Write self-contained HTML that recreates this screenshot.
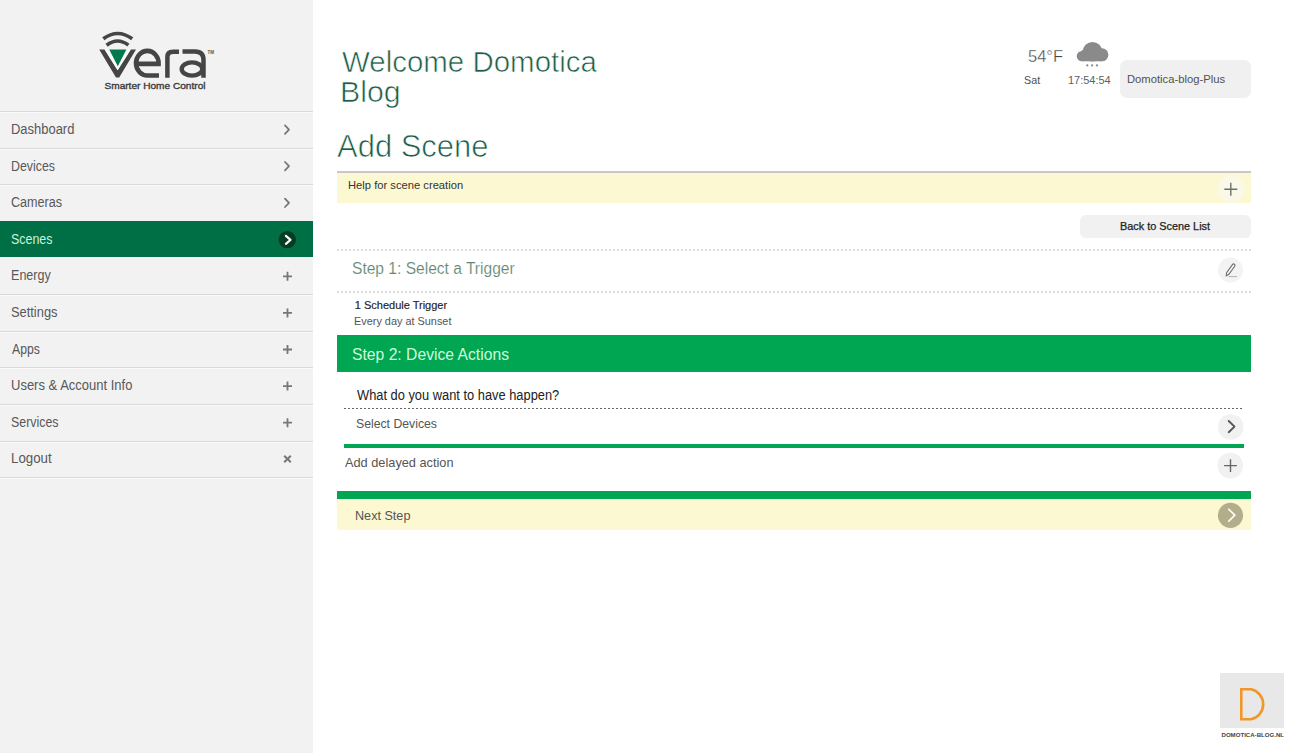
<!DOCTYPE html>
<html><head><meta charset="utf-8"><style>
html,body{margin:0;padding:0;width:1300px;height:753px;overflow:hidden;background:#fff;position:relative}
body{font-family:"Liberation Sans", sans-serif}
.t{position:absolute;white-space:nowrap;line-height:1;transform-origin:0 0}
.sb{position:absolute;left:0;top:0;width:313px;height:753px;background:#f2f2f2}
.sep{position:absolute;left:0;width:313px;height:1px;background:#d9d9d9;box-shadow:0 1px 0 #fafafa}
.abs{position:absolute}
.dots{position:absolute;height:2px;background:repeating-linear-gradient(90deg,#dcdcdc 0 2px,transparent 2px 4px)}
</style></head><body>
<div class="sb"></div>
<div class="sep" style="top:111px"></div>
<div class="sep" style="top:148px"></div>
<div class="sep" style="top:184px"></div>
<div class="sep" style="top:294px"></div>
<div class="sep" style="top:331px"></div>
<div class="sep" style="top:367px"></div>
<div class="sep" style="top:404px"></div>
<div class="sep" style="top:441px"></div>
<div class="sep" style="top:477px"></div>
<div class="abs" style="left:0;top:221px;width:313px;height:36px;background:#006f45"></div>
<svg class="abs" style="left:0;top:0" width="313" height="753" viewBox="0 0 313 753">
<path d="M285.0 125.4 L289.0 129.6 L285.0 133.8" fill="none" stroke="#777" stroke-width="1.8" stroke-linecap="round" stroke-linejoin="round"/><path d="M285.0 162.0 L289.0 166.2 L285.0 170.4" fill="none" stroke="#777" stroke-width="1.8" stroke-linecap="round" stroke-linejoin="round"/><path d="M285.0 198.6 L289.0 202.8 L285.0 207.0" fill="none" stroke="#777" stroke-width="1.8" stroke-linecap="round" stroke-linejoin="round"/><circle cx="287.3" cy="239.6" r="8.7" fill="#083b24"/><path d="M285.9 235.8 L290.5 239.8 L285.9 243.8" fill="none" stroke="#f2fff6" stroke-width="2.2" stroke-linecap="round" stroke-linejoin="round"/><path d="M283.0 276.3 H292.0 M287.5 271.8 V280.8" stroke="#777" stroke-width="1.8" fill="none"/><path d="M283.0 312.9 H292.0 M287.5 308.4 V317.4" stroke="#777" stroke-width="1.8" fill="none"/><path d="M283.0 349.5 H292.0 M287.5 345.0 V354.0" stroke="#777" stroke-width="1.8" fill="none"/><path d="M283.0 386.1 H292.0 M287.5 381.6 V390.6" stroke="#777" stroke-width="1.8" fill="none"/><path d="M283.0 422.7 H292.0 M287.5 418.2 V427.2" stroke="#777" stroke-width="1.8" fill="none"/><path d="M284.2 455.7 L290.8 462.3 M290.8 455.7 L284.2 462.3" stroke="#777" stroke-width="2" fill="none"/>
<!-- logo -->
<path d="M103.3 38.8 Q117.6 28.2 132.2 38.8" stroke="#454545" stroke-width="3.6" fill="none"/>
<path d="M106.6 45.2 Q117.6 36.8 128.4 45.2" stroke="#454545" stroke-width="3.6" fill="none"/>
<path d="M99.2 49.4 L104.6 49.4 L117.6 70.2 L130.8 49.4 L136 49.4 L119.2 77.6 L116 77.6 Z" fill="#454545"/>
<path d="M104.6 49.4 L130.8 49.4 L117.6 70.2 Z" fill="#fafafa"/>
<path d="M109.2 49.6 L126.4 49.6 L117.8 66.2 Z" fill="#007a4d"/>
<path d="M137 63.9 H158.6 A11.3 12.3 0 1 0 147.8 75.5 H159" stroke="#454545" stroke-width="4.6" fill="none"/>
<path d="M167.4 77.8 V57 Q167.4 51.8 173 51.8 H179" stroke="#454545" stroke-width="4.5" fill="none"/>
<path d="M182.5 51.4 H195 Q203.5 51.4 203.5 60 V77.8" stroke="#454545" stroke-width="4.5" fill="none"/>
<ellipse cx="192" cy="69" rx="10.3" ry="6.6" stroke="#454545" stroke-width="4.4" fill="none"/>
<text x="207.5" y="53.5" font-family="Liberation Sans" font-size="4.5" font-weight="700" fill="#555">TM</text>
<text x="104.5" y="88.5" font-family="Liberation Sans" font-size="9.8" font-weight="400" fill="#3a3a3a" stroke="#3a3a3a" stroke-width="0.35" textLength="101" lengthAdjust="spacingAndGlyphs">Smarter Home Control</text>
</svg>
<!-- user box -->
<div class="abs" style="left:1120px;top:60px;width:131px;height:38px;background:#f0f0f0;border-radius:7px"></div>
<!-- weather cloud -->
<svg class="abs" style="left:1070px;top:36px" width="45" height="35" viewBox="1070 36 45 35">
<g fill="#8a8a8a"><circle cx="1081.9" cy="56.1" r="5.2"/><circle cx="1101.9" cy="54.8" r="6.5"/><circle cx="1092.5" cy="51.8" r="9.8"/><rect x="1081.9" y="50" width="20" height="11.3"/></g>
<circle cx="1087.3" cy="65.4" r="1.1" fill="#8a8a8a"/><circle cx="1092.1" cy="65.4" r="1.1" fill="#8a8a8a"/><circle cx="1096.9" cy="65.4" r="1.1" fill="#8a8a8a"/>
</svg>
<!-- help box -->
<div class="abs" style="left:337px;top:171px;width:914px;height:32px;background:#fbf8d2;box-sizing:border-box;border-top:2px solid #cbc6ca"></div>
<!-- back button -->
<div class="abs" style="left:1080px;top:215px;width:171px;height:23px;background:#f1f1f1;border-radius:6px"></div>
<div class="dots" style="left:337px;top:249px;width:914px"></div>
<div class="dots" style="left:337px;top:291px;width:914px"></div>
<!-- green band -->
<div class="abs" style="left:337px;top:335px;width:914px;height:37px;background:#00a651"></div>
<div class="abs" style="left:344px;top:408px;width:900px;height:1px;background:repeating-linear-gradient(90deg,#666 0 2px,transparent 2px 4px)"></div>
<div class="abs" style="left:344px;top:444px;width:900px;height:4px;background:#00a651"></div>
<div class="abs" style="left:337px;top:491px;width:914px;height:8px;background:#00a651"></div>
<div class="abs" style="left:337px;top:499px;width:914px;height:31px;background:#fbf8d2"></div>
<svg class="abs" style="left:1200px;top:170px" width="60" height="370" viewBox="1200 170 60 370">
<circle cx="1231" cy="189" r="13.5" fill="#faf8e6"/>
<path d="M1224.3 189.2 H1237.3 M1230.8 182.7 V195.7" stroke="#6f6f6f" stroke-width="1.4" fill="none"/>
<circle cx="1230.5" cy="270" r="12.5" fill="#f3f3f3"/>
<path d="M1226.3 275.8 L1226.6 272.6 L1232.4 264.6 A1.4 1.4 0 0 1 1234.7 266.2 L1228.9 274.3 Z" fill="none" stroke="#6f6f6f" stroke-width="1.1"/>
<path d="M1228.8 276.6 H1237" stroke="#aaa" stroke-width="0.9"/>
<circle cx="1230.8" cy="427" r="12.8" fill="#f1f1f1"/>
<path d="M1228.7 421.0 L1234.5 426.6 L1228.7 432.2" fill="none" stroke="#555" stroke-width="1.9" stroke-linecap="round" stroke-linejoin="round"/>
<circle cx="1230.3" cy="465.6" r="12.8" fill="#f1f1f1"/>
<path d="M1224.1 465.6 H1236.9 M1230.5 459.20000000000005 V472.0" stroke="#666" stroke-width="1.4" fill="none"/>
<circle cx="1230.5" cy="515.3" r="12.6" fill="#b3ad8c"/>
<path d="M1228.8 509.3 L1234.8 515.2 L1228.8 521.1" fill="none" stroke="#fafaf0" stroke-width="1.8" stroke-linecap="round" stroke-linejoin="round"/>
</svg>
<!-- domotica logo -->
<div class="abs" style="left:1220px;top:673px;width:64px;height:55px;background:#e8e8e8"></div>
<svg class="abs" style="left:1215px;top:670px" width="75" height="75" viewBox="1215 670 75 75">
<path d="M1241.3 689.3 H1251 A15.2 15.3 0 0 1 1251 719.3 H1241.3 Z" fill="none" stroke="#f0962a" stroke-width="2.6"/>
<text x="1221.5" y="736.5" font-family="Liberation Sans" font-size="6" font-weight="700" fill="#444" textLength="62.5" lengthAdjust="spacingAndGlyphs">DOMOTICA-BLOG.NL</text>
</svg>
<div class="t" style="left:11.17px;top:122px;font-size:14px;font-weight:400;color:#585858;transform:scaleX(0.9254);">Dashboard</div>
<div class="t" style="left:11.12px;top:159px;font-size:14px;font-weight:400;color:#585858;transform:scaleX(0.8833);">Devices</div>
<div class="t" style="left:11.10px;top:195px;font-size:14px;font-weight:400;color:#585858;transform:scaleX(0.8982);">Cameras</div>
<div class="t" style="left:11.11px;top:232px;font-size:14px;font-weight:400;color:#c9f2dc;transform:scaleX(0.8889);">Scenes</div>
<div class="t" style="left:11.10px;top:268px;font-size:14px;font-weight:400;color:#585858;transform:scaleX(0.8977);">Energy</div>
<div class="t" style="left:11.08px;top:305px;font-size:14px;font-weight:400;color:#585858;transform:scaleX(0.9184);">Settings</div>
<div class="t" style="left:12.00px;top:342px;font-size:14px;font-weight:400;color:#585858;transform:scaleX(0.8750);">Apps</div>
<div class="t" style="left:11.07px;top:378px;font-size:14px;font-weight:400;color:#585858;transform:scaleX(0.9287);">Users &amp; Account Info</div>
<div class="t" style="left:11.12px;top:415px;font-size:14px;font-weight:400;color:#585858;transform:scaleX(0.8846);">Services</div>
<div class="t" style="left:11.05px;top:451px;font-size:14px;font-weight:400;color:#585858;transform:scaleX(0.9476);">Logout</div>
<div class="t" style="left:342.00px;top:48px;font-size:29px;font-weight:400;color:#1b5e46;transform:scaleX(1.0159);-webkit-text-stroke:0.6px #fff">Welcome Domotica</div>
<div class="t" style="left:339.91px;top:78px;font-size:29px;font-weight:400;color:#1b5e46;transform:scaleX(1.0463);-webkit-text-stroke:0.6px #fff">Blog</div>
<div class="t" style="left:337.20px;top:130px;font-size:32px;font-weight:400;color:#1b5e46;transform:scaleX(0.9677);-webkit-text-stroke:0.7px #fff">Add Scene</div>
<div class="t" style="left:347.98px;top:180px;font-size:11px;font-weight:400;color:#333;transform:scaleX(1.0179);">Help for scene creation</div>
<div class="t" style="left:1027.97px;top:49px;font-size:16px;font-weight:400;color:#444;transform:scaleX(1.0303);-webkit-text-stroke:0.3px #fff">54°F</div>
<div class="t" style="left:1024.06px;top:75px;font-size:11.5px;font-weight:400;color:#505050;transform:scaleX(0.9375);">Sat</div>
<div class="t" style="left:1068.45px;top:75px;font-size:11.5px;font-weight:400;color:#606060;transform:scaleX(0.9545);">17:54:54</div>
<div class="t" style="left:1127.48px;top:74px;font-size:11px;font-weight:400;color:#505050;transform:scaleX(1.0211);">Domotica-blog-Plus</div>
<div class="t" style="left:1120.17px;top:221px;font-size:10.5px;font-weight:400;color:#222;transform:scaleX(1.0349);-webkit-text-stroke:0.25px #222">Back to Scene List</div>
<div class="t" style="left:351.73px;top:261px;font-size:16px;font-weight:400;color:#5e8873;transform:scaleX(0.9729);-webkit-text-stroke:0.15px #fff">Step 1: Select a Trigger</div>
<div class="t" style="left:354.80px;top:300px;font-size:11px;font-weight:400;color:#222;transform:scaleX(1.0000);-webkit-text-stroke:0.15px #222">1 Schedule Trigger</div>
<div class="t" style="left:354.01px;top:316px;font-size:11px;font-weight:400;color:#555;transform:scaleX(0.9898);">Every day at Sunset</div>
<div class="t" style="left:351.98px;top:346px;font-size:17px;font-weight:400;color:#ccfcd9;transform:scaleX(0.9231);">Step 2: Device Actions</div>
<div class="t" style="left:356.60px;top:388px;font-size:14px;font-weight:400;color:#222;transform:scaleX(0.9182);">What do you want to have happen?</div>
<div class="t" style="left:356.06px;top:417px;font-size:13px;font-weight:400;color:#555;transform:scaleX(0.9412);">Select Devices</div>
<div class="t" style="left:345.20px;top:456px;font-size:13px;font-weight:400;color:#555;transform:scaleX(0.9818);">Add delayed action</div>
<div class="t" style="left:355.49px;top:510px;font-size:12.5px;font-weight:400;color:#555;transform:scaleX(1.0093);">Next Step</div>
</body></html>
